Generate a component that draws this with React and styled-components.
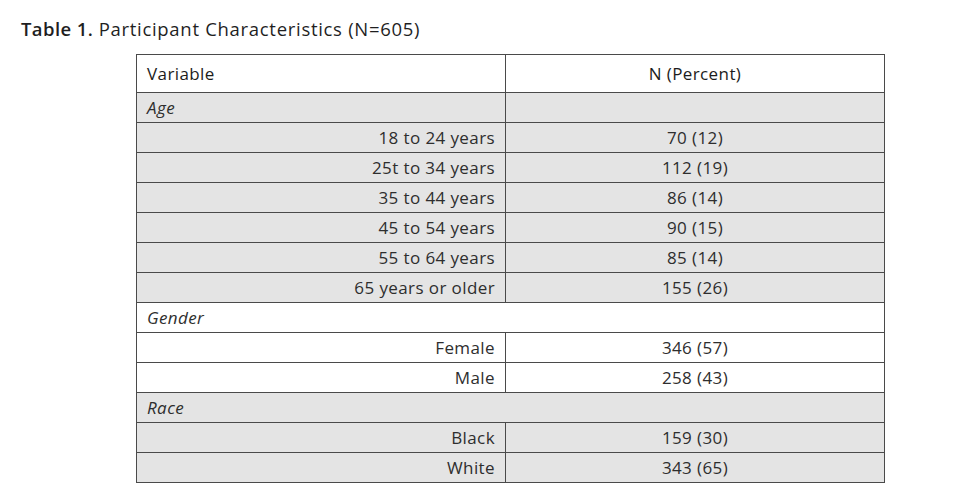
import React from "react";
import styled, { createGlobalStyle } from "styled-components";

const Global = createGlobalStyle`
  html, body { margin: 0; padding: 0; background: #ffffff; }
  body { font-family: "Open Sans", Lato, sans-serif; color: #2a2a2a; }
`;

const Page = styled.div`
  padding: 16px 0 0 21px;
`;

const Title = styled.div`
  font-size: 18.5px;
  letter-spacing: 0.7px;
  line-height: 26px;
  color: #1f1f1f;
  height: 38px;
`;

const TitleLabel = styled.span`
  font-weight: 600;
  letter-spacing: 0.4px;
`;

const Table = styled.table`
  margin-left: 115px;
  border-collapse: collapse;
  table-layout: fixed;
  width: 749px;
  font-size: 17px;
  letter-spacing: 0.4px;
  color: #2e2e2e;
  border: 1.5px solid #6e6e6e;
`;

const HeadCell = styled.th`
  box-sizing: border-box;
  height: 38px;
  padding: 0 10px;
  font-weight: 500;
  color: #1c1c1c;
  text-align: ${(p) => (p.$center ? "center" : "left")};
  border: 1px solid #4a4a4a;
  background: #ffffff;
  width: ${(p) => (p.$w ? p.$w + "px" : "auto")};
`;

const Row = styled.tr`
  background: ${(p) => (p.$shade ? "#e4e4e4" : "#ffffff")};
`;

const Cell = styled.td`
  height: 29px;
  padding: 0 10px;
  border: 1px solid #4a4a4a;
  text-align: ${(p) => p.$align || "left"};
  font-style: ${(p) => (p.$italic ? "italic" : "normal")};
  line-height: 1;
`;

const groups = [
  {
    label: "Age",
    shade: true,
    split: true,
    items: [
      ["18 to 24 years", "70 (12)"],
      ["25t to 34 years", "112 (19)"],
      ["35 to 44 years", "86 (14)"],
      ["45 to 54 years", "90 (15)"],
      ["55 to 64 years", "85 (14)"],
      ["65 years or older", "155 (26)"],
    ],
  },
  {
    label: "Gender",
    shade: false,
    split: false,
    items: [
      ["Female", "346 (57)"],
      ["Male", "258 (43)"],
    ],
  },
  {
    label: "Race",
    shade: true,
    split: false,
    items: [
      ["Black", "159 (30)"],
      ["White", "343 (65)"],
    ],
  },
];

export default function App() {
  return (
    <Page>
      <Global />
      <Title>
        <TitleLabel>Table 1.</TitleLabel> Participant Characteristics (N=605)
      </Title>
      <Table>
        <thead>
          <tr>
            <HeadCell $w={369}>Variable</HeadCell>
            <HeadCell $center>N (Percent)</HeadCell>
          </tr>
        </thead>
        <tbody>
          {groups.map((g) => (
            <React.Fragment key={g.label}>
              <Row $shade={g.shade}>
                {g.split ? (
                  <>
                    <Cell $italic>{g.label}</Cell>
                    <Cell />
                  </>
                ) : (
                  <Cell $italic colSpan={2}>
                    {g.label}
                  </Cell>
                )}
              </Row>
              {g.items.map(([k, v]) => (
                <Row $shade={g.shade} key={k}>
                  <Cell $align="right">{k}</Cell>
                  <Cell $align="center">{v}</Cell>
                </Row>
              ))}
            </React.Fragment>
          ))}
        </tbody>
      </Table>
    </Page>
  );
}
